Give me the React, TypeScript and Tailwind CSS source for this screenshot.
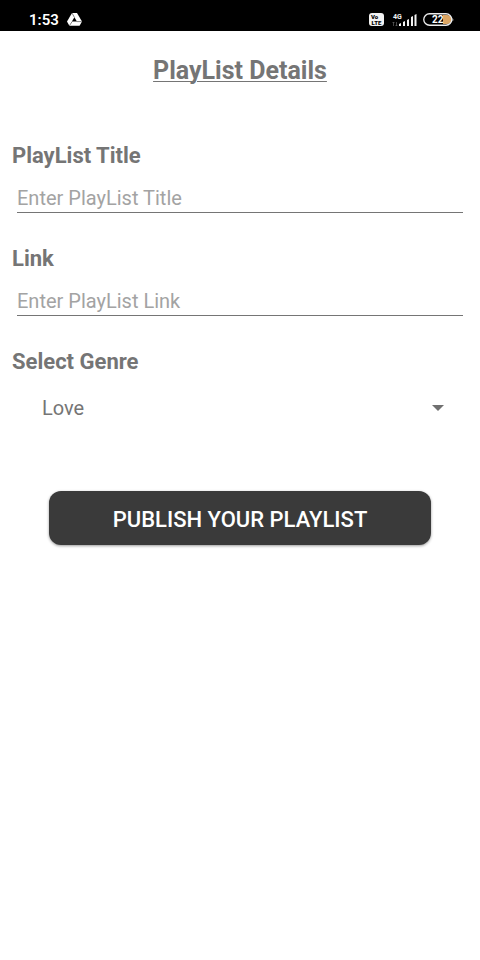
import { useState } from "react";

const genres = ["Love", "Party", "Sad", "Workout", "Chill"];

function StatusBar() {
  return (
    <header className="flex h-[31px] items-center justify-between bg-black pt-2 pr-[26px] pl-[29px] text-white">
      <div className="flex items-center gap-2">
        <span className="text-[15px] leading-5 font-semibold">1:53</span>
        <svg width="15" height="13" viewBox="0 0 15 13" fill="currentColor" aria-hidden="true">
          <path d="M5 0h5l5 8.6-2.4 4.1H2.4L0 8.6z" />
          <path d="M7.4 4.2l2.5 4.4H4.9z" fill="#000" />
          <path d="M5 0l2.4 4.4M9.7 8.6h5M5.1 8.6l-2.6 4" stroke="#000" strokeWidth="0.5" />
        </svg>
      </div>

      <div className="flex items-center">
        <span className="flex h-[13px] w-[15px] flex-col items-center justify-center rounded-[3px] bg-[#f2f2f2] text-[6px] leading-[6px] font-black text-black">
          <span className="self-start pl-[2px]">Vo</span>
          <span>LTE</span>
        </span>
        <svg className="ml-2" width="25" height="14" viewBox="0 0 25 14" fill="#f2f2f2" aria-hidden="true">
          <text x="1" y="6" fontSize="7" fontWeight="700">
            4G
          </text>
          <path d="M1.5 13V9M0.5 10l1-1 1 1M4.5 9v4M3.5 12l1 1 1-1" stroke="#666" strokeWidth="0.7" fill="none" />
          <path d="M7 13v-2l2-1v3zM11 13V9l2-1v5zM15 13V7l2-1v7zM19 13V4l2-1v10zM22.5 13V2l2-1v12z" />
        </svg>
        <svg className="ml-[6px]" width="31" height="13" viewBox="0 0 31 13" aria-hidden="true">
          <path d="M20 2h4a4.5 4.5 0 0 1 0 9h-4z" fill="#dca664" />
          <rect x="0.75" y="0.75" width="28" height="11.5" rx="5.75" fill="none" stroke="#eee" strokeWidth="1.3" />
          <path d="M29.5 4.5q1.5 2 0 4z" fill="#eee" />
          <text x="9" y="10" fontSize="10" fontWeight="700" fill="#fff">
            22
          </text>
        </svg>
      </div>
    </header>
  );
}

type FieldProps = {
  id: string;
  label: string;
  placeholder: string;
};

function Field({ id, label, placeholder }: FieldProps) {
  return (
    <div>
      <label htmlFor={id} className="block text-[22px] leading-7 font-bold">
        {label}
      </label>
      <div className="mt-3 px-[5px]">
        <input
          id={id}
          type="text"
          placeholder={placeholder}
          className="block h-[31px] w-full border-b border-[#757575] pt-[2px] text-[20px] text-[#757575] outline-none placeholder:text-[#a3a3a3]"
        />
      </div>
    </div>
  );
}

export default function App() {
  const [genre, setGenre] = useState("Love");

  return (
    <div className="min-h-screen bg-white font-[Roboto,sans-serif] text-[#757575]">
      <StatusBar />

      <main className="px-3 pt-6 pb-8">
        <h1 className="text-center text-[25px] leading-8 font-bold underline decoration-1 underline-offset-2">
          PlayList Details
        </h1>

        <form className="mt-[55px]" onSubmit={(e) => e.preventDefault()}>
          <div className="flex flex-col gap-8">
            <Field id="title" label="PlayList Title" placeholder="Enter PlayList Title" />
            <Field id="link" label="Link" placeholder="Enter PlayList Link" />

            <div>
              <label htmlFor="genre" className="block text-[22px] leading-7 font-bold">
                Select Genre
              </label>
              <div className="mt-4 grid items-center px-[18px]">
                <select
                  id="genre"
                  value={genre}
                  onChange={(e) => setGenre(e.target.value)}
                  className="col-start-1 row-start-1 h-8 w-full appearance-none bg-transparent px-3 text-[20px] outline-none"
                >
                  {genres.map((g) => (
                    <option key={g}>{g}</option>
                  ))}
                </select>
                <svg
                  className="pointer-events-none col-start-1 row-start-1 mr-[6px] justify-self-end"
                  width="12"
                  height="6"
                  viewBox="0 0 12 6"
                  fill="#707070"
                  aria-hidden="true"
                >
                  <path d="M0 0h12L6 6z" />
                </svg>
              </div>
            </div>
          </div>

          <div className="mt-[67px] px-[37px]">
            <button
              type="submit"
              className="h-[54px] w-full rounded-xl bg-[#3a3a3a] pt-[2px] text-[22px] font-medium text-white shadow-[0_1px_3px_rgba(0,0,0,0.4)]"
            >
              PUBLISH YOUR PLAYLIST
            </button>
          </div>
        </form>
      </main>
    </div>
  );
}
